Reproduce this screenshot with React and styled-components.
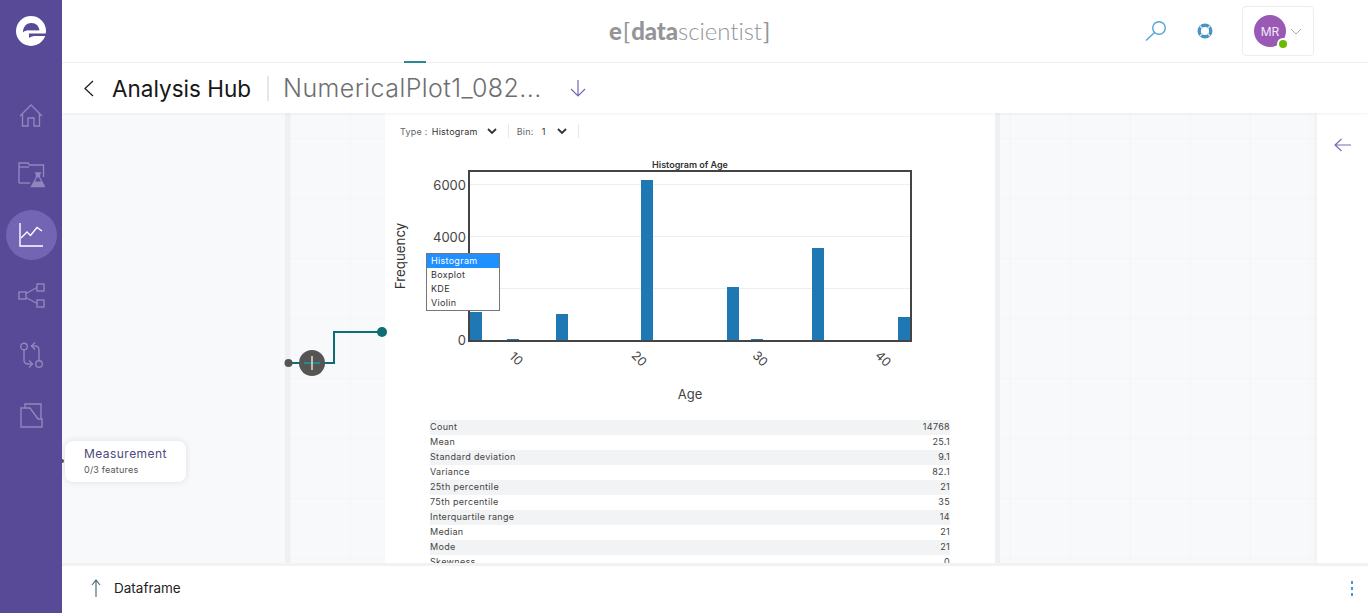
import React from 'react';
import styled, { createGlobalStyle } from 'styled-components';

const Global = createGlobalStyle`
  html, body { margin: 0; padding: 0; height: 100%; overflow: hidden; background: #fff; }
  body { font-family: "Inter", "Roboto", "Liberation Sans", sans-serif; color: #222; }
  #root { height: 100%; }
`;

const Page = styled.div`
  display: flex;
  width: 1368px;
  height: 613px;
  overflow: hidden;
`;

const Sidebar = styled.nav`
  flex: 0 0 62px;
  background: #584a96;
  display: flex;
  flex-direction: column;
  align-items: center;
`;

const LogoBox = styled.div`
  height: 62px;
  display: flex;
  align-items: center;
  justify-content: center;
`;

const NavList = styled.div`
  display: flex;
  flex-direction: column;
  align-items: center;
  gap: 10px;
  padding-top: 28px;
`;

const NavItem = styled.div`
  width: 51px;
  height: 50px;
  border-radius: 50%;
  display: flex;
  align-items: center;
  justify-content: center;
  background: ${p => (p.$active ? '#7364b4' : 'transparent')};
  color: ${p => (p.$active ? '#ffffff' : '#9187bf')};
`;

const Main = styled.div`
  flex: 1;
  min-width: 0;
  display: flex;
  flex-direction: column;
`;

const TopBar = styled.header`
  flex: 0 0 63px;
  box-sizing: border-box;
  position: relative;
  display: flex;
  align-items: center;
  justify-content: flex-end;
  padding-right: 54px;
  border-bottom: 1px solid #f0f0f0;
  background: #fff;
`;

const Brand = styled.div`
  position: absolute;
  left: 547px;
  top: 16px;
  font-family: "Lato", "Open Sans", sans-serif;
  font-size: 24px;
  line-height: 30px;
  color: #939598;
  white-space: nowrap;
  letter-spacing: -0.05px;
  b { font-weight: 900; }
  span { font-weight: 300; }
`;

const Bracket = styled.span`
  font-weight: 400 !important;
  margin: 0 1px;
`;

const TopIcons = styled.div`
  display: flex;
  align-items: center;
`;

const IconSlot = styled.div`
  display: flex;
  align-items: center;
  justify-content: center;
  width: ${p => p.$w || 24}px;
  margin-right: ${p => p.$mr || 0}px;
`;

const UserBox = styled.div`
  width: 72px;
  height: 50px;
  box-sizing: border-box;
  border: 1px solid #ececec;
  border-radius: 4px;
  display: flex;
  align-items: center;
  padding-left: 11px;
  gap: 4px;
`;

const Avatar = styled.div`
  position: relative;
  width: 32px;
  height: 32px;
  border-radius: 50%;
  background: #9b59b6;
  color: #f3e9f7;
  font-size: 12px;
  display: flex;
  align-items: center;
  justify-content: center;
`;

const StatusDot = styled.span`
  position: absolute;
  right: -3px;
  bottom: -3px;
  width: 8px;
  height: 8px;
  border: 2px solid #fff;
  border-radius: 50%;
  background: #6aba00;
`;

const TabMark = styled.span`
  position: absolute;
  left: 342px;
  bottom: -1px;
  width: 22px;
  height: 2px;
  background: #2c8a94;
`;

const TitleBar = styled.div`
  flex: 0 0 50px;
  box-sizing: border-box;
  display: flex;
  align-items: center;
  padding-left: 21px;
  background: #fff;
  box-shadow: 0 1px 3px rgba(0, 0, 0, 0.06);
  position: relative;
  z-index: 3;
`;

const HubTitle = styled.div`
  font-size: 22.5px;
  color: #161616;
  margin-left: 18px;
  padding-right: 16px;
  border-right: 2px solid #e3e6ea;
  line-height: 25px;
  white-space: nowrap;
`;

const FileTitle = styled.div`
  font-size: 25px;
  font-weight: 300;
  color: #6f6f6f;
  margin-left: 14px;
  letter-spacing: 0.42px;
  white-space: nowrap;
  width: 287px;
`;

const Canvas = styled.div`
  flex: 1;
  min-height: 0;
  position: relative;
  overflow: hidden;
  display: grid;
  grid-template-columns: 223px 5px 95px 610px 5px 317px 51px;
  grid-template-rows: minmax(0, 1fr);
  background: #f8f9fa;
`;

const Stripe = styled.div`
  background: #eef1f4;
`;

const GridArea = styled.div`
  background-color: #f8f9fa;
  background-image:
    linear-gradient(#f5f5f5 1px, transparent 1px),
    linear-gradient(90deg, #f5f5f5 1px, transparent 1px);
  background-size: 60px 60px;
  background-position: ${p => p.$ox}px 25px;
`;

const Card = styled.section`
  background: #fff;
  overflow: hidden;
  min-height: 0;
`;

const Toolbar = styled.div`
  display: flex;
  align-items: center;
  height: 14px;
  margin: 11px 0 0 15px;
  font-size: 9px;
  letter-spacing: 0.25px;
  color: #666;
`;

const ToolGroup = styled.div`
  display: flex;
  align-items: center;
  height: 14px;
  padding-right: ${p => p.$pr}px;
  margin-right: 8px;
  border-right: 1px solid #e8e8e8;
`;

const ToolValue = styled.span`
  color: #333;
  margin-left: ${p => p.$ml}px;
  margin-right: ${p => p.$mr}px;
`;

const ChartWrap = styled.div`
  position: relative;
  height: 282px;
`;

const ChartSvg = styled.svg`
  display: block;
  font-family: "Inter", "Roboto", sans-serif;
`;

const TypeMenu = styled.ul`
  position: absolute;
  left: 41px;
  top: 115px;
  width: 74px;
  height: 58px;
  box-sizing: border-box;
  margin: 0;
  padding: 0;
  list-style: none;
  border: 1px solid #767676;
  background: #fff;
  font-size: 9px;
  letter-spacing: 0.3px;
`;

const TypeOption = styled.li`
  height: 14px;
  line-height: 14px;
  padding-left: 4px;
  background: ${p => (p.$selected ? '#1e90ff' : 'transparent')};
  color: ${p => (p.$selected ? '#fff' : '#333')};
`;

const StatsTable = styled.div`
  margin: 0 45px;
  font-size: 9px;
  letter-spacing: 0.33px;
  color: #444;
`;

const StatRow = styled.div`
  display: flex;
  justify-content: space-between;
  height: 15px;
  line-height: 14px;
  background: ${p => (p.$odd ? '#f2f3f5' : '#fff')};
`;

const SidePanel = styled.aside`
  background: #fff;
  box-shadow: -2px 0 4px rgba(0, 0, 0, 0.04);
  display: flex;
  justify-content: center;
  align-items: flex-start;
  padding-top: 25px;
  position: relative;
`;

const DiagramWire = styled.svg`
  position: absolute;
  left: 220px;
  top: 210px;
`;

const MeasureNode = styled.div`
  position: absolute;
  left: 3px;
  top: 328px;
  width: 121px;
  height: 41px;
  box-sizing: border-box;
  padding: 6px 0 0 19px;
  border-radius: 8px;
  background: #fff;
  box-shadow: 0 0 6px rgba(60, 60, 90, 0.14);
`;

const MeasureTitle = styled.div`
  font-size: 12px;
  letter-spacing: 0.45px;
  line-height: 14px;
  color: #4b4a7d;
`;

const MeasureSub = styled.div`
  font-size: 9px;
  letter-spacing: 0.2px;
  line-height: 13px;
  margin-top: 2px;
  color: #555;
`;

const NodePort = styled.span`
  position: absolute;
  left: -2px;
  top: 346px;
  width: 4px;
  height: 4px;
  border-radius: 50%;
  background: #555;
`;

const Footer = styled.footer`
  flex: 0 0 50px;
  box-sizing: border-box;
  border-top: 3px solid #f2f2f2;
  display: flex;
  align-items: center;
  padding: 0 15px 3px 29px;
  background: #fff;
`;

const FooterLabel = styled.span`
  font-size: 13.5px;
  color: #222;
  margin-left: 13px;
  flex: 1;
`;

const Kebab = styled.div`
  display: flex;
  flex-direction: column;
  gap: 3px;
  span {
    width: 2px;
    height: 3px;
    background: #4a98da;
  }
`;

const Logo = () => (
  <svg width="30" height="30" viewBox="0 0 30 30">
    <circle cx="15" cy="15" r="15" fill="#fff" />
    <path d="M7 16.5C7 10 11 7 15.5 7c4.4 0 7.5 3 8 7.5H12.5c-2.2 0-4 .6-5.5 2z" fill="#584a96" />
    <path d="M13 17.5h17v2.6H19.5c-2 0-4.500 .4-6.500 1.900z" fill="#584a96" />
    <path d="M7.500 18c1.500-1.300 3-1.800 5-1.800H30v-1.500H11c-2 0-3.500 1-3.500 3.300z" fill="#fff" />
  </svg>
);

const IconHome = () => (
  <svg width="24" height="23" viewBox="0 0 24 23" fill="none" stroke="currentColor" strokeWidth="1.400">
    <path d="M1 12 12 1l11 11" />
    <path d="M3.500 10V22H9V14h6v8h5.500V10" />
  </svg>
);

const IconFolderLab = () => (
  <svg width="27" height="26" viewBox="0 0 27 26" fill="none" stroke="currentColor" strokeWidth="1.400">
    <path d="M1 21V1h9l1.500 2H25.500V15" />
    <path d="M1 5h10" />
    <path d="M1 21h11" />
    <path d="M17 11h6M18.500 11v4.500L13.500 24.500h13l-5-9V11" fill="currentColor" />
    <path d="M19 15.500h2l2 4H17z" fill="#584a96" stroke="none" />
  </svg>
);

const IconChart = () => (
  <svg width="24" height="24" viewBox="0 0 24 24" fill="none" stroke="currentColor" strokeWidth="1.400">
    <path d="M1 0v23h23" />
    <path d="M2 15l6-6 3.500 3.500L18 4.500l5 3.500" />
  </svg>
);

const IconGraph = () => (
  <svg width="27" height="25" viewBox="0 0 27 25" fill="none" stroke="currentColor" strokeWidth="1.400">
    <rect x="1" y="9" width="7" height="7" />
    <rect x="19" y="1" width="7" height="7" />
    <rect x="19" y="17" width="7" height="7" />
    <path d="M8 10.500 19 4.500M8 14.500l11 6" />
  </svg>
);

const IconCompare = () => (
  <svg width="23" height="27" viewBox="0 0 23 27" fill="none" stroke="currentColor" strokeWidth="1.400">
    <circle cx="4" cy="4.500" r="3.300" />
    <circle cx="19" cy="22" r="3.300" />
    <path d="M4 8V18c0 2.500 1 4 4 4h4" />
    <path d="M9 18.500l3.500 3.500L9 25.500" />
    <path d="M19 18.500V8c0-2.500-1-4-4-4h-3.500" />
    <path d="M15 .5 11.500 4l3.500 3.500" />
  </svg>
);

const IconStack = () => (
  <svg width="23" height="25" viewBox="0 0 23 25" fill="none" stroke="currentColor" strokeWidth="1.400">
    <path d="M1 5H10L18 16H22V24H1Z" />
    <path d="M5 5V1H21V16" />
  </svg>
);

const IconSearch = () => (
  <svg width="22" height="22" viewBox="0 0 22 22" fill="none" stroke="#55a5d4" strokeWidth="1.400">
    <circle cx="14" cy="8" r="6.300" />
    <path d="M9.500 12.500 1 20.500" />
  </svg>
);

const IconHelp = () => (
  <svg width="16" height="16" viewBox="0 0 16 16" fill="none">
    <circle cx="8" cy="8" r="5.800" stroke="#4a94c4" strokeWidth="3.400" />
    <path d="M3 3l2.800 2.800M13 3l-2.800 2.800M3 13l2.800-2.800M13 13l-2.800-2.800" stroke="#e6f1f8" strokeWidth="1.200" />
  </svg>
);

const Chevron = () => (
  <svg width="12" height="7" viewBox="0 0 12 7" fill="none" stroke="#aaa" strokeWidth="1">
    <path d="M1 1l5 5 5-5" />
  </svg>
);

const MiniChevron = () => (
  <svg width="10" height="7" viewBox="0 0 10 7" fill="none" stroke="#333" strokeWidth="1.800">
    <path d="M1 1l4 4 4-4" />
  </svg>
);

const ArrowDown = () => (
  <svg width="16" height="17" viewBox="0 0 16 17" fill="none" stroke="#7567b5" strokeWidth="1.200">
    <path d="M8 0v16M1 9l7 7 7-7" />
  </svg>
);

const ArrowLeft = () => (
  <svg width="17" height="14" viewBox="0 0 17 14" fill="none" stroke="#7a6db5" strokeWidth="1.200">
    <path d="M17 7H1M7.500 1 1 7l6.500 6" />
  </svg>
);

const ArrowUp = () => (
  <svg width="10" height="18" viewBox="0 0 10 18" fill="none" stroke="#4f6f7a" strokeWidth="1.200">
    <path d="M5 18V1M1 6l4-5 4 5" />
  </svg>
);

const BackIcon = () => (
  <svg width="11" height="17" viewBox="0 0 11 17" fill="none" stroke="#222" strokeWidth="1.300">
    <path d="M10 1 2 8.500l8 7.500" />
  </svg>
);

// bars are placed relative to the card's left edge (385) and the chart box top (138)
const bars = [
  { x: 85, top: 174, h: 28 },
  { x: 122, top: 201, h: 1 },
  { x: 171, top: 176, h: 26 },
  { x: 256, top: 42, h: 160 },
  { x: 342, top: 149, h: 53 },
  { x: 366, top: 201, h: 1 },
  { x: 427, top: 110, h: 92 },
  { x: 513, top: 179, h: 23 },
];

const gridLines = [46, 98, 150];
const yLabels = [
  { y: 52, t: '6000' },
  { y: 104, t: '4000' },
  { y: 207, t: '0' },
];
const xLabels = [
  { x: 131, t: '10' },
  { x: 254, t: '20' },
  { x: 375, t: '30' },
  { x: 498, t: '40' },
];

const stats = [
  ['Count', '14768'],
  ['Mean', '25.1'],
  ['Standard deviation', '9.1'],
  ['Variance', '82.1'],
  ['25th percentile', '21'],
  ['75th percentile', '35'],
  ['Interquartile range', '14'],
  ['Median', '21'],
  ['Mode', '21'],
  ['Skewness', '0'],
];

const Chart = () => (
  <ChartSvg width="610" height="282" viewBox="0 0 610 282">
    <text x="305" y="30" textAnchor="middle" fontSize="9" fontWeight="600" fill="#333">Histogram of Age</text>
    {gridLines.map(y => (
      <line key={y} x1="84" x2="526" y1={y + 0.5} y2={y + 0.5} stroke="#eeeeee" />
    ))}
    {bars.map(b => (
      <rect key={b.x} x={b.x} y={b.top} width="12" height={b.h} fill="#1f77b4" />
    ))}
    <rect x="84" y="33" width="442" height="170" fill="none" stroke="#444" strokeWidth="2" />
    {yLabels.map(l => (
      <text key={l.t} x="81" y={l.y} textAnchor="end" fontSize="13" fill="#444">{l.t}</text>
    ))}
    {xLabels.map(l => (
      <text key={l.t} x={l.x} y="225" textAnchor="middle" fontSize="12.500" fill="#444" transform={`rotate(45 ${l.x} 221)`}>{l.t}</text>
    ))}
    <text x="305" y="261" textAnchor="middle" fontSize="13" fill="#444">Age</text>
    <text x="20" y="118" textAnchor="middle" fontSize="13.300" fill="#333" transform="rotate(-90 20 118)">Frequency</text>
  </ChartSvg>
);

export default function App() {
  return (
    <Page>
      <Global />
      <Sidebar>
        <LogoBox><Logo /></LogoBox>
        <NavList>
          <NavItem><IconHome /></NavItem>
          <NavItem><IconFolderLab /></NavItem>
          <NavItem $active><IconChart /></NavItem>
          <NavItem><IconGraph /></NavItem>
          <NavItem><IconCompare /></NavItem>
          <NavItem><IconStack /></NavItem>
        </NavList>
      </Sidebar>
      <Main>
        <TopBar>
          <TabMark />
          <Brand><b>e</b><Bracket>[</Bracket><b>data</b><span>scientist</span><Bracket>]</Bracket></Brand>
          <TopIcons>
            <IconSlot $w={24} $mr={29}><IconSearch /></IconSlot>
            <IconSlot $w={16} $mr={29}><IconHelp /></IconSlot>
            <UserBox>
              <Avatar>MR<StatusDot /></Avatar>
              <Chevron />
            </UserBox>
          </TopIcons>
        </TopBar>
        <TitleBar>
          <BackIcon />
          <HubTitle>Analysis Hub</HubTitle>
          <FileTitle>NumericalPlot1_082...</FileTitle>
          <ArrowDown />
        </TitleBar>
        <Canvas>
          <div />
          <Stripe />
          <GridArea $ox={0} />
          <Card>
            <Toolbar>
              <ToolGroup $pr={11}>
                Type :<ToolValue $ml={4} $mr={9}>Histogram</ToolValue><MiniChevron />
              </ToolGroup>
              <ToolGroup $pr={11}>
                Bin:<ToolValue $ml={8} $mr={11}>1</ToolValue><MiniChevron />
              </ToolGroup>
            </Toolbar>
            <ChartWrap>
              <Chart />
              <TypeMenu>
                <TypeOption $selected>Histogram</TypeOption>
                <TypeOption>Boxplot</TypeOption>
                <TypeOption>KDE</TypeOption>
                <TypeOption>Violin</TypeOption>
              </TypeMenu>
            </ChartWrap>
            <StatsTable>
              {stats.map(([label, value], i) => (
                <StatRow key={label} $odd={i % 2 === 0}>
                  <span>{label}</span>
                  <span>{value}</span>
                </StatRow>
              ))}
            </StatsTable>
          </Card>
          <Stripe />
          <GridArea $ox={10} />
          <SidePanel><ArrowLeft /></SidePanel>
          <DiagramWire width="110" height="60" viewBox="0 0 110 60">
            <path d="M6 40h46V9h48" fill="none" stroke="#0d6e74" strokeWidth="2" />
            <circle cx="100" cy="9" r="5" fill="#0d6e74" />
            <circle cx="6.500" cy="40" r="4" fill="#555" />
            <circle cx="30" cy="40" r="13" fill="#555" />
            <path d="M22 40h16" stroke="#1a9aa0" strokeWidth="1.500" />
            <path d="M30 33v14" stroke="#e8dcc8" strokeWidth="1.500" />
          </DiagramWire>
          <NodePort />
          <MeasureNode>
            <MeasureTitle>Measurement</MeasureTitle>
            <MeasureSub>0/3 features</MeasureSub>
          </MeasureNode>
        </Canvas>
        <Footer>
          <ArrowUp />
          <FooterLabel>Dataframe</FooterLabel>
          <Kebab><span /><span /><span /></Kebab>
        </Footer>
      </Main>
    </Page>
  );
}
